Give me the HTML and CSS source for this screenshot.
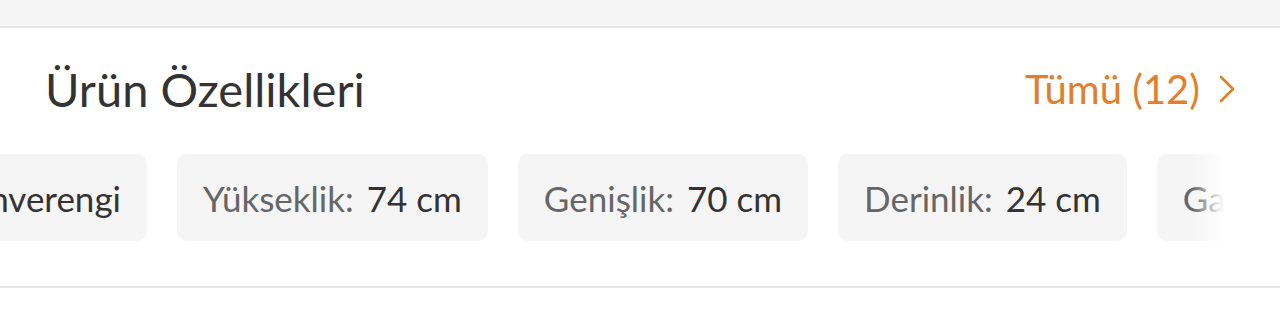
FILE: index.html
```html
<!DOCTYPE html>
<html lang="tr">
<head>
    <meta charset="UTF-8">
    <meta name="viewport" content="width=device-width, initial-scale=1.0">
    <title>Ürün Özellikleri</title>
    <link rel="stylesheet" href="styles.css">
</head>
<body>
    <div class="top-band"></div>

    <section class="features">
        <div class="features-header">
            <h2>Ürün Özellikleri</h2>
            <a class="all-link" href="#">
                Tümü (12)
                <svg class="chevron" viewBox="0 0 18 30">
                    <path d="M3,3 L15,15 L3,27" />
                </svg>
            </a>
        </div>

        <div class="spec-strip">
            <div class="spec-peek">
                <div class="spec-chip">
                    <span class="spec-label">Renk:</span>
                    <span class="spec-value">Kahverengi</span>
                </div>
            </div>
            <div class="spec-chip">
                <span class="spec-label">Yükseklik:</span>
                <span class="spec-value">74 cm</span>
            </div>
            <div class="spec-chip">
                <span class="spec-label">Genişlik:</span>
                <span class="spec-value">70 cm</span>
            </div>
            <div class="spec-chip">
                <span class="spec-label">Derinlik:</span>
                <span class="spec-value">24 cm</span>
            </div>
            <div class="spec-chip">
                <span class="spec-label">Garanti:</span>
                <span class="spec-value">2 Yıl</span>
            </div>
        </div>
    </section>
</body>
</html>
```

FILE: styles.css
```css
body {
    font-family: 'Lato', 'Noto Sans', sans-serif;
    margin: 0;
    padding: 0;
    background-color: white;
    color: #333333;
}

.top-band {
    height: 26px;
    background-color: #f5f5f5;
    border-bottom: 2px solid #e6e6e6;
}

.features {
    padding: 33px 0 45px;
    border-bottom: 2px solid #e6e6e6;
}

.features-header {
    display: flex;
    justify-content: space-between;
    align-items: center;
    padding: 0 44px 0 45px;
}

h2 {
    margin: 0;
    font-size: 47px;
    font-weight: 400;
    line-height: 1.2;
    color: #333333;
}

.all-link {
    display: flex;
    align-items: center;
    gap: 18px;
    font-size: 40px;
    color: #e27f2d;
    text-decoration: none;
}

.chevron {
    width: 18px;
    height: 30px;
    fill: none;
    stroke: #e27f2d;
    stroke-width: 2.6;
    stroke-linecap: round;
    stroke-linejoin: round;
}

.spec-strip {
    position: relative;
    display: flex;
    gap: 30px;
    margin-top: 37px;
    overflow: hidden;
}

.spec-strip::after {
    content: '';
    position: absolute;
    top: 0;
    right: 0;
    bottom: 0;
    width: 88px;
    background: linear-gradient(to right, rgba(255, 255, 255, 0) 0, #ffffff 32px, #ffffff 100%);
}

.spec-peek {
    width: 147px;
    flex-shrink: 0;
    display: flex;
    justify-content: flex-end;
    overflow: hidden;
}

.spec-chip {
    flex-shrink: 0;
    display: flex;
    align-items: center;
    gap: 13px;
    height: 87px;
    padding: 0 26px;
    box-sizing: border-box;
    background-color: #f5f5f5;
    border-radius: 10px;
    font-size: 35px;
    white-space: nowrap;
}

.spec-label {
    color: #666666;
}

.spec-value {
    color: #333333;
}
```
